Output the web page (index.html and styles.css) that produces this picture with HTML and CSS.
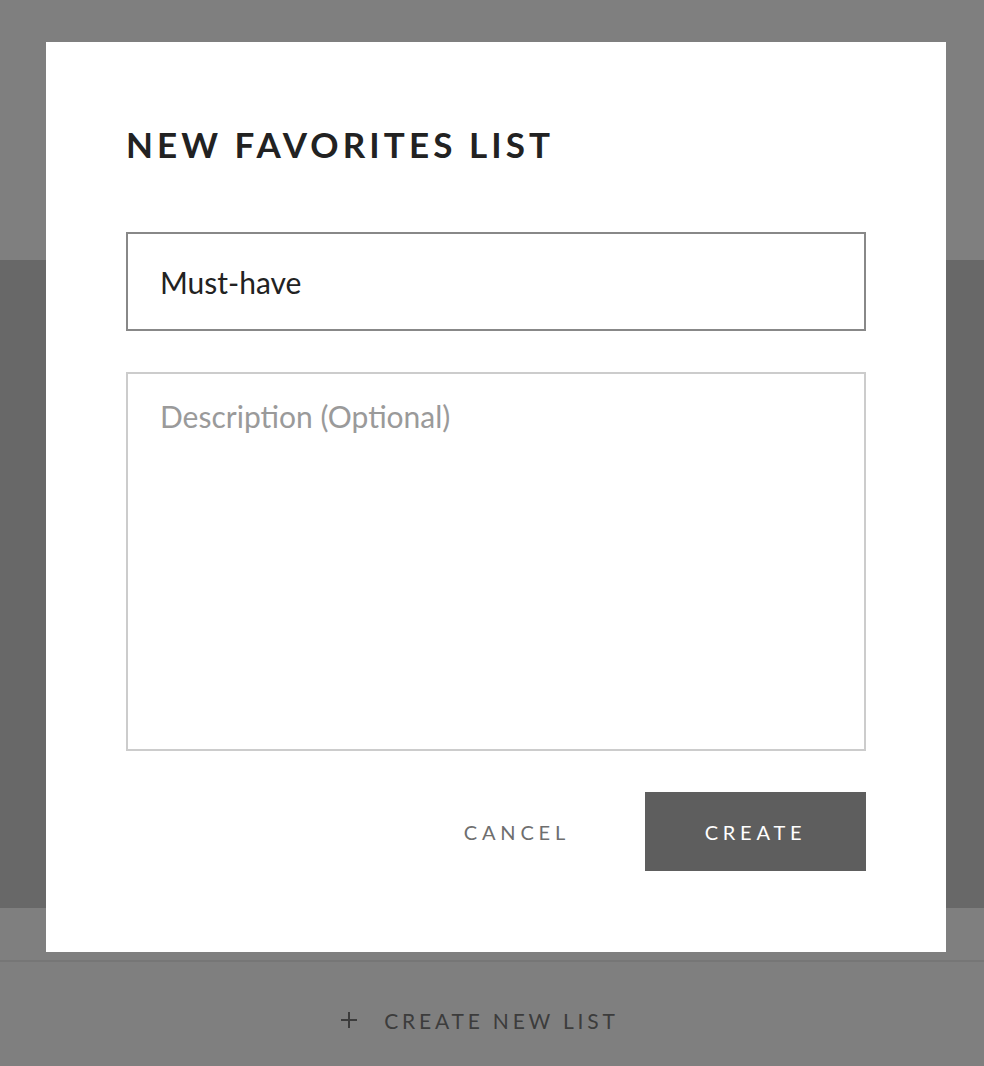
FILE: index.html
```html
<!DOCTYPE html>
<html lang="en">
<head>
<meta charset="utf-8">
<title>New favorites list</title>
<link rel="stylesheet" href="styles.css">
</head>
<body>
<div class="page">
  <header class="page-header">
    <h1 class="page-title">FAVORITES</h1>
  </header>
  <section class="lists"></section>
  <div class="spacer"></div>
  <footer class="page-footer">
    <button class="new-list" type="button">
      <svg class="plus" width="16" height="16" viewBox="0 0 16 16" aria-hidden="true"><path d="M8 0V16M0 8H16" stroke="currentColor" stroke-width="2" fill="none"/></svg>
      <span>CREATE NEW LIST</span>
    </button>
  </footer>
</div>

<div class="overlay"></div>
<div class="modal" role="dialog" aria-labelledby="modal-title">
  <h2 class="modal-title" id="modal-title">NEW FAVORITES LIST</h2>
  <input class="field name-field" type="text" value="Must-have">
  <textarea class="field desc-field" placeholder="Description (Optional)"></textarea>
  <div class="actions">
    <button class="btn btn-cancel" type="button">CANCEL</button>
    <button class="btn btn-create" type="button">CREATE</button>
  </div>
</div>
</body>
</html>
```

FILE: styles.css
```css
* { box-sizing: border-box; }

html, body {
  margin: 0;
  padding: 0;
  height: 100%;
}

body {
  font-family: "Lato", "Liberation Sans", sans-serif;
  background: #ffffff;
  overflow: hidden;
}

.page {
  display: flex;
  flex-direction: column;
  min-height: 1066px;
}

.page-header {
  height: 260px;
  background: #ffffff;
  display: flex;
  justify-content: center;
  padding-top: 32px;
}

.page-title {
  margin: 0;
  font-size: 36px;
  line-height: 44px;
  font-weight: 700;
  letter-spacing: 4px;
  color: #222;
}

.lists {
  height: 648px;
  background: #d0d0d0;
}

.spacer {
  height: 54px;
  background: #ffffff;
  border-bottom: 2px solid #ececec;
}

.page-footer {
  flex: 1;
  background: #ffffff;
  display: flex;
  justify-content: center;
  padding-top: 38px;
}

.new-list {
  display: flex;
  align-items: center;
  gap: 27px;
  background: none;
  border: 0;
  padding: 0 24px 0 0;
  font-family: "Lato", "Liberation Sans", sans-serif;
  font-size: 21px;
  letter-spacing: 3.8px;
  color: #787878;
  height: 40px;
}

.plus { color: #787878; }

.overlay {
  position: fixed;
  inset: 0;
  background: rgba(0, 0, 0, 0.5);
}

.modal {
  position: fixed;
  left: 46px;
  top: 42px;
  width: 900px;
  height: 910px;
  background: #ffffff;
  padding: 82px 80px 81px;
  display: flex;
  flex-direction: column;
}

.modal-title {
  margin: 0 0 68px;
  font-size: 35px;
  line-height: 40px;
  font-weight: 700;
  letter-spacing: 4.1px;
  color: #222222;
}

.field {
  display: block;
  width: 740px;
  font-family: "Lato", "Liberation Sans", sans-serif;
  font-size: 30px;
  color: #222222;
  background: #ffffff;
  outline: none;
  margin: 0;
}

.name-field {
  height: 99px;
  border: 2px solid #888888;
  padding: 0 32px;
}

.desc-field {
  margin-top: 41px;
  height: 379px;
  border: 2px solid #cccccc;
  padding: 23px 32px;
  line-height: 38px;
  resize: none;
}

.desc-field::placeholder {
  color: #9a9a9a;
  opacity: 1;
}

.actions {
  margin-top: 41px;
  display: flex;
  justify-content: flex-end;
  align-items: center;
  gap: 75px;
}

.btn {
  font-family: "Lato", "Liberation Sans", sans-serif;
  font-size: 20px;
  letter-spacing: 4.8px;
  border: 0;
  padding: 0;
  cursor: pointer;
}

.btn-cancel {
  background: none;
  color: #6e6e6e;
}

.btn-create {
  width: 221px;
  height: 79px;
  background: #5e5e5e;
  color: #ffffff;
  padding: 0;
}
```
